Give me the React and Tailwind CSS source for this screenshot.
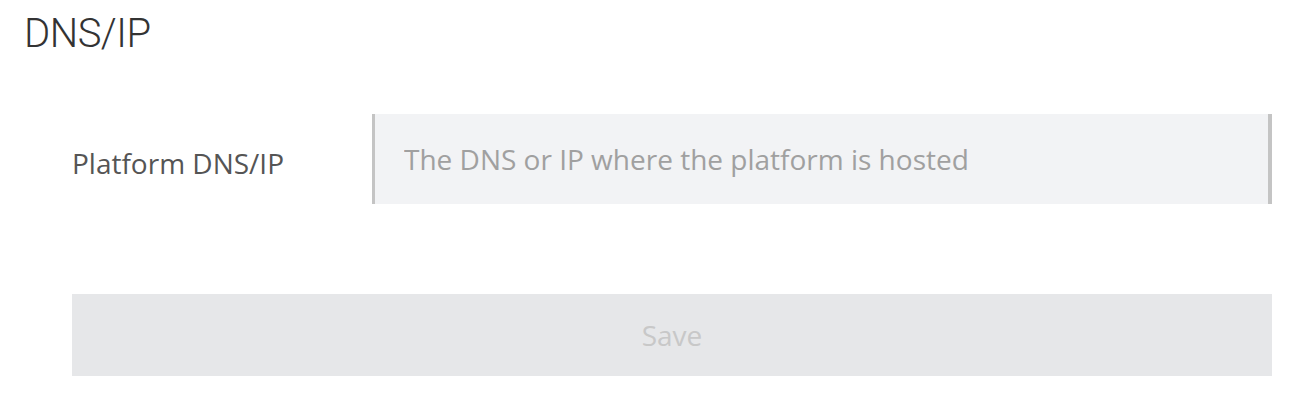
import React, { useState } from "react";

function App() {
  const [dns, setDns] = useState("");

  return (
    <div className="bg-white w-[1313px] h-[414px] font-['Open_Sans',sans-serif]">
      <h2 className="pl-[24px] pt-[12px] text-[40px] leading-[44px] font-light text-[#333333] font-['Roboto',sans-serif] tracking-[-0.5px]">
        DNS/IP
      </h2>
      <div className="pl-[72px] pr-[41px] mt-[58px]">
        <div className="flex items-center">
          <label className="w-[300px] text-[28px] text-[#555555] pt-[8px]">Platform DNS/IP</label>
          <input
            type="text"
            value={dns}
            onChange={(e) => setDns(e.target.value)}
            placeholder="The DNS or IP where the platform is hosted"
            className="flex-1 h-[90px] bg-[#f2f3f5] border-l-[3px] border-r-[4px] border-[#c4c4c4] pl-[29px] text-[28px] text-[#555555] placeholder:text-[#a0a0a0] outline-none"
          />
        </div>
        <button
          disabled
          className="mt-[90px] w-full h-[82px] bg-[#e6e7e9] text-[28px] text-[#c8c8c8]"
        >
          Save
        </button>
      </div>
    </div>
  );
}

export default App;
